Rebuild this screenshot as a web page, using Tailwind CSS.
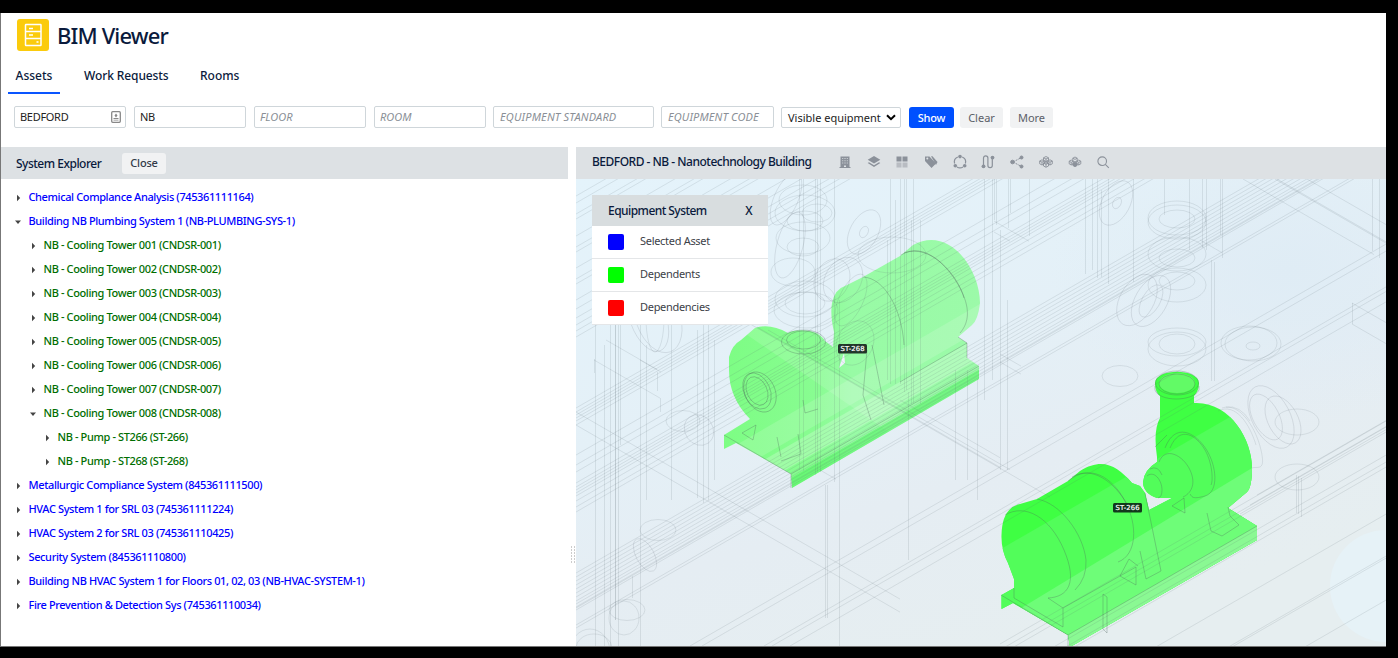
<!DOCTYPE html>
<html lang="en">
<head>
<meta charset="utf-8">
<title>BIM Viewer</title>
<script src="https://cdn.jsdelivr.net/npm/@tailwindcss/browser@4"></script>
</head>
<body class="bg-black w-[1398px] h-[658px] overflow-hidden pt-[13px] font-['Noto_Sans','Open_Sans',sans-serif] text-[#0a1a3c]">
<div class="w-[1386px] h-[634px] bg-white border-l border-b border-[#777] flex flex-col overflow-hidden">
  <header class="flex items-center gap-[8px] pl-4 pt-[6px] h-[38px]">
    <svg class="w-8 h-8 shrink-0" viewBox="0 0 32 32" fill="none" stroke="#fff" stroke-width="1.500"><rect width="32" height="32" rx="3" fill="#fbcb0c" stroke="none"/><rect x="8.500" y="5.500" width="15.500" height="21" rx=".5"/><path d="M8.500 12.500h15.500M8.500 19.500h15.500M12 9.500h4M12 16h4M19.500 23h2"/></svg>
    <h1 class="text-[22px] leading-8 font-medium tracking-[-0.85px] whitespace-nowrap">BIM Viewer</h1>
  </header>
  <nav class="flex h-[43px] pt-[12px] pl-[7px] text-[12px] leading-[26px] font-medium">
    <a class="w-[52px] h-[31px] text-center border-b-2 border-[#0a55ff]">Assets</a>
    <a class="ml-6 w-[84px] text-center tracking-[-0.1px] whitespace-nowrap">Work Requests</a>
    <a class="ml-8 w-[39px] text-center">Rooms</a>
  </nav>
  <section class="flex items-start pl-[13px] pt-[12px] h-[53px] text-[11px] leading-5 text-[#222]">
    <div class="w-[112px] h-[22px] border border-[#cfd6da] rounded-[2px] px-[5px] flex items-center justify-between"><span class="tracking-[-0.3px]">BEDFORD</span>
      <svg class="w-[10px] h-[12px] mr-[-1px]" viewBox="0 0 10 12"><rect x=".7" y=".7" width="8.600" height="10.600" rx="1" fill="none" stroke="#888" stroke-width="1.300"/><path d="M5 2.500l1.500 2-1.500 2-1.500-2zM2.500 7h5v1h-5zM2.500 8.800h5v.6h-5z" fill="#888"/></svg></div>
    <div class="ml-2 w-[112px] h-[22px] border border-[#cfd6da] rounded-[2px] px-[5px] tracking-[-0.3px]">NB</div>
    <div class="ml-2 w-[112px] h-[22px] border border-[#cfd6da] rounded-[2px] px-[5px] italic text-[#8a8f96]">FLOOR</div>
    <div class="ml-2 w-[112px] h-[22px] border border-[#cfd6da] rounded-[2px] px-[5px] italic text-[#8a8f96]">ROOM</div>
    <div class="ml-[7px] w-[161px] h-[22px] border border-[#cfd6da] rounded-[2px] px-[6px] italic text-[#8a8f96] tracking-[0.17px]">EQUIPMENT STANDARD</div>
    <div class="ml-[7px] w-[113px] h-[22px] border border-[#cfd6da] rounded-[2px] px-[6px] italic text-[#8a8f96] tracking-[0.12px] whitespace-nowrap">EQUIPMENT CODE</div>
    <div class="ml-[7px] mt-px w-[120px] h-[21px] border border-[#cfd6da] rounded-[2px] pl-[6px] pr-1 flex items-center justify-between whitespace-nowrap"><span>Visible equipment</span>
      <svg class="w-[10px] h-[7px]" viewBox="0 0 10 7" fill="none" stroke="#000" stroke-width="2"><path d="M1 1.200l4 4 4-4"/></svg></div>
    <div class="ml-2 mt-px w-[45px] h-[21px] rounded-[3px] bg-[#0050ff] text-white text-center leading-[22px] font-medium tracking-[-0.2px]">Show</div>
    <div class="ml-[6px] mt-px w-[43px] h-[21px] rounded-[3px] bg-[#f1f2f3] text-[#5b6068] text-center leading-[22px]">Clear</div>
    <div class="ml-[7px] mt-px w-[43px] h-[21px] rounded-[3px] bg-[#f1f2f3] text-[#5b6068] text-center leading-[22px]">More</div>
  </section>
  <main class="flex flex-1 min-h-0">
    <aside class="w-[567px] shrink-0">
      <div class="flex items-center bg-[#dde1e4] h-8 pl-[15px] text-[12px] font-medium">
        <span class="w-[106px] pt-[2px] tracking-[-0.5px] whitespace-nowrap">System Explorer</span>
        <span class="w-[44px] h-[21px] rounded-[3px] bg-[#f1f2f3] text-center leading-5 text-[11px] tracking-[-0.2px] text-[#333a48]">Close</span>
      </div>
      <ul id="tree" class="pt-[6px] text-[11px] leading-6 font-medium tracking-[-0.38px] whitespace-nowrap text-[#0000ff]"></ul>
    </aside>
    <div class="w-2 shrink-0 flex flex-col items-center pt-[399px] pl-px gap-px">
      <i class="w-1 h-[2px] border-x border-[#ccc]"></i><i class="w-1 h-[2px] border-x border-[#ccc]"></i><i class="w-1 h-[2px] border-x border-[#ccc]"></i><i class="w-1 h-[2px] border-x border-[#ccc]"></i><i class="w-1 h-[2px] border-x border-[#ccc]"></i><i class="w-1 h-[2px] border-x border-[#ccc]"></i>
    </div>
    <section class="flex-1 min-w-0 flex flex-col">
      <div class="flex items-center bg-[#dde1e4] h-8 pl-4 pb-[3px] text-[12px] font-medium shrink-0">
        <span class="w-[245px] tracking-[-0.5px] whitespace-nowrap">BEDFORD - NB - Nanotechnology Building</span>
        <div class="flex gap-[12.700px] text-[#8b919a]">
          <svg class="w-4 h-4" viewBox="0 0 16 16" fill="currentColor"><path fill-rule="evenodd" d="M3.500 2.500h9v10.500h1v1h-11v-1h1zM5.300 4v1h.9V4zm2.200 0v1h1V4zM9.800 4v1h.9V4zM5.300 6.200v1h.9v-1zm2.200 0v1h1v-1zm2.300 0v1h.9v-1zM5.300 8.500v1h.9v-1zm4.500 0v1h.9v-1zM7.500 8.500v1h1v-1zM7 11.500V13h2v-1.500z"/></svg>
          <svg class="w-4 h-4" viewBox="0 0 16 16" fill="currentColor"><path d="M8 2l6.300 3.800L8 9.500 1.700 5.800zM3 8.200l5 3 5-3 1.300.8L8 13 1.700 9z"/></svg>
          <svg class="w-4 h-4" viewBox="0 0 16 16" fill="currentColor"><path d="M2.500 2.500h5v5h-5zM8.500 2.500h5v5h-5z"/><path opacity=".45" d="M2.500 8.500h5v5h-5zM8.500 8.500h5v5h-5z"/></svg>
          <svg class="w-4 h-4" viewBox="0 0 16 16" fill="currentColor"><path fill-rule="evenodd" d="M2 2.500v4.500l6.500 7 4.500-4.500L6.500 2.500zm2.300 1a1 1 0 1 1 0 2 1 1 0 0 1 0-2z"/><path d="M8 2.300h1.500l5 5.700-1.500 3z"/></svg>
          <svg class="w-4 h-4" viewBox="0 0 16 16" fill="none" stroke="currentColor" stroke-width="1.200"><path d="M5.800 3A5.500 5.500 0 0 0 2.600 9.500M10.200 3a5.500 5.500 0 0 1 3.200 6.500M5 13a5.500 5.500 0 0 0 6 0"/><g fill="currentColor" stroke="none"><circle cx="8" cy="2.600" r="1.800"/><circle cx="3.300" cy="11.700" r="1.800"/><circle cx="12.700" cy="11.700" r="1.800"/></g></svg>
          <svg class="w-4 h-4" viewBox="0 0 16 16" fill="none" stroke="currentColor" stroke-width="1.200"><path d="M3.500 11V4a2.200 2.200 0 0 1 4.400 0v7.500a2.200 2.200 0 0 0 4.400 0V4.500"/><g fill="currentColor" stroke="none"><circle cx="3.500" cy="12.300" r="1.900"/><circle cx="12.500" cy="3.600" r="1.900"/></g></svg>
          <svg class="w-4 h-4" viewBox="0 0 16 16" fill="currentColor" stroke="currentColor"><path d="M4 8l8.500-4.500M4 8l8.500 4.500" fill="none" stroke-dasharray="2 1"/><circle cx="3.500" cy="8" r="1.800"/><circle cx="12.500" cy="3.500" r="1.500"/><circle cx="12.500" cy="12.500" r="1.500"/></svg>
          <svg class="w-4 h-4" viewBox="0 0 16 16" fill="none" stroke="currentColor" stroke-width=".9"><path d="M8 2.500l2.500 1.300v2.400L8 7.500 5.500 6.200V3.800zM8 5v8M5.500 3.800L8 5l2.500-1.200M1.700 7L4 5.800 6.300 7v2.800L4 11 1.700 9.800zM14.300 7L12 5.800 9.700 7v2.800L12 11l2.300-1.200zM1.700 7L4 8.200 6.300 7M4 8.200V11M9.700 7L12 8.200 14.300 7M12 8.200V11M5.500 9L8 7.700 10.500 9v3L8 13.300 5.500 12zM5.500 9L8 10.300 10.500 9"/></svg>
          <svg class="w-4 h-4" viewBox="0 0 16 16" fill="none" stroke="currentColor" stroke-width=".9"><path d="M8 3l2.200 1.200v2.600L8 8 5.800 6.800V4.200zM5.800 4.200L8 5.400l2.200-1.200M2.200 7.200L4.200 6l2 1.200v2.600l-2 1.200-2-1.200zM13.800 7.200L11.800 6l-2 1.200v2.600l2 1.200 2-1.200zM2.200 7.200l2 1.200 2-1.200M4.200 8.400V11M9.800 7.200l2 1.200 2-1.200M11.800 8.400V11"/><path d="M5.900 9.200L8 8l2.100 1.200v2.300L8 12.700l-2.100-1.200z" fill="currentColor"/></svg>
          <svg class="w-4 h-4" viewBox="0 0 16 16" fill="none" stroke="currentColor" stroke-width="1.100"><circle cx="7.200" cy="7.200" r="4.300"/><path d="M10.300 10.300l3.500 3.500"/></svg>
        </div>
      </div>
      <div class="relative flex-1 min-h-0 overflow-hidden">
        <svg id="scene" class="block w-[810px] h-[467px]" viewBox="576 179 810 467">
          <defs>
            <linearGradient id="bg" x1="0" y1="0" x2=".55" y2="1"><stop offset="0" stop-color="#e4f3fb"/><stop offset=".45" stop-color="#e4f0f7"/><stop offset=".7" stop-color="#e5edf3"/><stop offset="1" stop-color="#e6eef0"/></linearGradient>
            <linearGradient id="p1" x1="724" y1="0" x2="980" y2="0" gradientUnits="userSpaceOnUse"><stop offset="0" stop-color="#7dfd84"/><stop offset=".35" stop-color="#88fc91"/><stop offset=".5" stop-color="#98fba5"/><stop offset="1" stop-color="#9cfaa9"/></linearGradient>
            <radialGradient id="sky"><stop offset="0" stop-color="#dfecf5"/><stop offset="1" stop-color="#dfecf5" stop-opacity="0"/></radialGradient>
            <path id="pump1" d="M750 419Q729 398 729 370V357Q732 345 741 340L755 328Q770 323 788 333C795 329 818 328 825 341L833 347 834 332Q830 315 832 303Q835 289 845 286L863 277 900 256 913 245C950 225 980 270 980 303Q978 320 972 325L958 337 967 343V358L979 366V379L792 488 791 474 736 443 724 449V435Z"/>
            <path id="pump2" d="M1001.500 609V595L1014 588V579L1008 563Q1001 550 1001.500 535Q1002 508 1020 504L1037 499 1068 481 1080 471C1103 457 1117 466 1132 483L1140 486 1145 493 1149 510 1172 498H1157Q1143 493 1143 482 1144 470 1157 462V457Q1153 430 1160 418V396Q1155 392 1155 383C1156 368 1198 368 1199 383Q1199 391 1194 396V403C1230 401 1252 440 1252 467Q1252 487 1247 492L1228 508 1257 526V540L1070 647 1068 635 1013 603Z"/>
            <clipPath id="c1"><use href="#pump1"/></clipPath>
            <clipPath id="c2"><use href="#pump2"/></clipPath>
          </defs>
          <rect x="576" y="179" width="810" height="467" fill="url(#bg)"/>
          <ellipse cx="1290" cy="270" rx="240" ry="150" fill="url(#sky)"/>
          <circle cx="1386" cy="586" r="56" fill="#e6f2f7"/>
          <use href="#pump1" fill="url(#p1)"/>
          <g clip-path="url(#c1)">
            <path d="M724 452L980 304V330L745 466z" fill="#fff" opacity=".14"/>
            <path d="M755 465L980 336V358L775 476z" fill="#fff" opacity=".22"/>
            <path d="M756 327L870 393 915 419 890 433 740 330z" fill="#fff" opacity=".13"/>
            <path d="M792 488L980 380V369L791 478z" fill="#4bf45b" opacity=".5"/>
            <path d="M844 353L839 368L845 363z" fill="#eef2fa"/>
          </g>
          <use href="#pump2" fill="#3fff43"/>
          <g clip-path="url(#c2)">
            <path d="M980 561L1270 394V700H980z" fill="#52fd5a"/>
            <path d="M990 627L1270 457V700H980z" fill="#6efd78"/>
            <path d="M1068 635L1257 526V560L1070 660z" fill="#8af993"/>
            <ellipse cx="1177" cy="383" rx="18" ry="10" fill="#62fa66"/>
          </g>
          <g id="wires" fill="none" stroke="#5b646e" stroke-opacity=".2" stroke-width=".7"></g>
          <g fill="none" stroke="#4b605a" stroke-opacity=".38" stroke-width=".8">
            <ellipse cx="803.500" cy="342" rx="22" ry="12"/><ellipse cx="803.500" cy="340" rx="17" ry="9"/>
            <ellipse cx="757" cy="391" rx="13" ry="19" transform="rotate(-25 757 391)"/><ellipse cx="757" cy="391" rx="10" ry="15" transform="rotate(-25 757 391)"/><ellipse cx="760" cy="392" rx="15" ry="21" transform="rotate(-25 760 392)"/>
            <path d="M901 255C925 240 950 268 961 290S967 325 960 333M904 253C930 243 958 275 964 298M863 277C885 278 902 310 904 345M742 433l14-8-3 15zM777 437l4 20M798 434l3 20-20 7M803 400l2 13 13-4M724 435L791 474V488M967 343L900 382M791 474L979 366M958 337l9 6v15M867 350l-4 45 8 25"/>
            <path d="M872 345l12 60"/>
            <ellipse cx="1177" cy="384" rx="18" ry="10"/><ellipse cx="1177" cy="383" rx="21.500" ry="12"/><path d="M1155 386v4c4 12 38 12 44 0v-4"/>
            <path d="M1005 515C1025 503 1050 517 1064 550S1068 597 1048 598M1037 499C1060 503 1083 533 1086 560Q1087 578 1075 590M1068 481C1090 463 1112 477 1125 501S1137 555 1118 562M1072 477C1092 465 1115 482 1128 506M1145 493l16 78-15 8-6-28M1155 447l12-12M1165 448C1175 422 1195 432 1206 449S1219 492 1205 496 1192 496 1190 494M1170 448C1180 424 1197 436 1205 450S1213 482 1211 485M1159 462C1165 446 1183 455 1190 470S1190 494 1183 497M1147 476c7-6 15 4 15 14q0 7-4 8M1150 469q8-4 12 6M1172 506l12-8 1 15zM1207 513l4 18 11 5 17-11-9-9-2-9M1014 588V598L1063 627V608L1136 567V585L1120 576 1129 559 1138 566M1048 598L1063 608M1103 594V629L1107 633V597zM1001 595L1068 635V646M1068 635L1257 526"/>
          </g>
          <g font-family="DejaVu Sans" font-size="6.800" fill="#fff" stroke="#fff" stroke-width=".2" text-anchor="middle">
            <rect x="838" y="344" width="29" height="9.500" rx="1.500" fill="#22362b" stroke="none"/><text x="852.500" y="351.300" textLength="24">ST-268</text>
            <rect x="1113" y="503" width="29" height="9.500" rx="1.500" fill="#12391c" stroke="none"/><text x="1127.500" y="510.300" textLength="24">ST-266</text>
          </g>
        </svg>
        <div class="absolute left-4 top-4 w-[176px] bg-white text-[11px] tracking-[-0.3px] text-[#3c4148]">
          <div class="flex justify-between bg-[#d8dddf] h-[31px] leading-8 pl-4 pr-4 text-[12px] font-medium tracking-[-0.55px] text-[#0a1a3c]"><span>Equipment System</span><span>X</span></div>
          <div class="flex items-center gap-4 h-[33px] pl-4 border-b border-[#e4e6e8]"><i class="w-4 h-4 rounded-[2px] bg-[#0000ff]"></i><span class="pb-[2px]">Selected Asset</span></div>
          <div class="flex items-center gap-4 h-[33px] pl-4 border-b border-[#e4e6e8]"><i class="w-4 h-4 rounded-[2px] bg-[#00ff00]"></i><span class="pb-[2px]">Dependents</span></div>
          <div class="flex items-center gap-4 h-[33px] pl-4 border-b border-[#e4e6e8]"><i class="w-4 h-4 rounded-[2px] bg-[#ff0000]"></i><span class="pb-[2px]">Dependencies</span></div>
        </div>
      </div>
    </section>
  </main>
</div>
<script>
// Rows of the system tree: [depth, open, label]
const rows = [
 [0,0,'Chemical Complance Analysis (745361111164)'],[0,1,'Building NB Plumbing System 1 (NB-PLUMBING-SYS-1)'],
 ...[1,2,3,4,5,6,7,8].map(n=>[1,n===8?1:0,`NB - Cooling Tower 00${n} (CNDSR-00${n})`]),
 [2,0,'NB - Pump - ST266 (ST-266)'],[2,0,'NB - Pump - ST268 (ST-268)'],
 [0,0,'Metallurgic Compliance System (845361111500)'],[0,0,'HVAC System 1 for SRL 03 (745361111224)'],
 [0,0,'HVAC System 2 for SRL 03 (745361110425)'],[0,0,'Security System (845361110800)'],
 [0,0,'Building NB HVAC System 1 for Floors 01, 02, 03 (NB-HVAC-SYSTEM-1)'],[0,0,'Fire Prevention & Detection Sys (745361110034)']];
const pad = ['pl-[13px]','pl-[28px] text-[#006e00]','pl-[42px] text-[#006e00]'];
document.getElementById('tree').innerHTML = rows.map(([d,o,t])=>
 `<li class="flex items-center h-6 ${pad[d]}"><svg class="w-2 h-2 mr-[6.500px] mt-px shrink-0" viewBox="0 0 8 8" fill="#444"><path d="${o?'M1 2.500h6L4 6z':'M3 .8l3.200 3.200L3 7.200z'}"/></svg><span>${t.replace('&','&amp;')}</span></li>`).join('');

// Wireframe of the building; sloped members follow the 30 degree isometric axes
const S=.5774; let d='';
const up=(x,y,x2)=>{d+=`M${x} ${y}L${x2} ${(y-(x2-x)*S).toFixed(1)}`};
const down=(x,y,x2)=>{d+=`M${x} ${y}L${x2} ${(y+(x2-x)*S).toFixed(1)}`};
const vert=(x,a,b)=>{d+=`M${x+.5} ${a}V${b}`};
[196,203,214,219,236,247,252,268,279,284,300,309,318,325,331,337,408,412,415,418,421,425].forEach(y=>up(576,y,1100));
[455,465,472,483,487,490,493,496,501,507,512].forEach(y=>up(576,y,1200));
[573,577,581,585,589,593,597,601,604,607,608,610].forEach(y=>up(576,y,1386));
[625,628].forEach(y=>up(576,y,1386));
[[690,1386],[702,1386],[764,1386],[772,1386],[790,1386]].forEach(([x,b])=>up(x,646,b));
[[1257,495],[1250,505],[1240,514]].forEach(([x,y])=>up(x,y,1386));
[[1000,644],[1000,650],[1000,655],[1000,678],[1000,685],[1000,690],[1000,737],[1000,779],[1000,781],[1000,823]].forEach(([x,y])=>up(x,y,1386));
[[576,412,900],[576,425,900],[745,321,1050],[757,327,1000],[768,330,1010],[900,400,1000],[1243,179,1374],[1275,179,1386],[1277,179,1386],[1307,179,1386],[594,360,660],[606,340,657],[640,360,661],[994,221,1029],[994,232,1010],[1200,240,1222],[1352,303,1386],[1352,324,1386],[1000,354,1021],[1000,362,1021],[820,470,836]].forEach(a=>down(...a));
[[595,320,646],[604,345,646],[610,320,646],[615,320,620],[615,320,620],[618,320,646],[620,320,445],[640,320,646],[646,345,500],[671,320,500],[660,398,412],[697,330,498],[703,320,503],[708,320,500],[714,340,480],[799,179,470],[803,179,471],[815,179,475],[817,179,472],[820,179,472],[827,485,618],[825,485,618],[834,179,482],[839,300,646],[887,240,380],[890,179,384],[895,200,384],[900,179,384],[904,179,392],[906,179,390],[911,220,404],[913,179,403],[920,220,404],[908,392,560],[955,370,480],[967,370,480],[977,379,500],[992,179,380],[994,179,220],[996,179,225],[1008,179,228],[1010,179,213],[1029,179,236],[984,179,400],[1000,230,470],[1007,300,470],[1085,179,274],[1092,179,270],[1097,179,278],[1101,190,277],[1108,179,284],[1133,179,282],[1164,179,215],[1189,179,250],[1202,179,248],[1206,179,250],[1222,179,258],[1220,179,235],[1211,260,381],[1214,262,381],[1352,303,324],[1372,179,251],[1379,179,258],[1296,475,513],[1298,476,514],[1301,478,517],[632,576,598],[594,359,373],[657,372,391]].forEach(a=>vert(...a));
// rings: cx, cy, rx, ry, rotation
const rings=[[1177,218,29,17],[1177,222,29,17],[1177,219,18,9],[1177,254,29,17],[1177,258,18,9],[1177,281,18,9],[1177,285,29,17],[1177,342,29,14],[1177,349,29,17],[1177,344,18,10],[1120,376,18,10.500],[1253,344,28,17],[1253,346,7,4],[1249,343,28,17],
[1116,203,14,24,28],[1117,203,4,6,28],[1137,300,17,28,30],[1151,301,16,28,30],[1151,301,9,18,30],[1271,417,19,34,-28],[1266,417,13,25,-28],[1283,420,15,26,-28],[1297,422,22,13],[1297,477,22,13],
[658,530,18,10.500],[645,555,9,18,-28],[627,610,18,10.500],[624,618,15,17],[594,648,18,14],[590,652,20,23],[683,421,17,10.500],[699,430,14,16,-35],[658,318,22,36,-20],[648,318,18,35,-20],[655,318,9,34],
[803,200,24,15],[805,213,30,18],[805,221,18,10],[803,238,27,16],[803,247,16,9],[805,299,30,18],[805,303,20,11],[806,310,32,18],[790,245,13,34,15],[832,280,17,22,25],[843,280,18,24,30],[864,232,14,24,28],[864,232,4,6,28],[786,199,12,28,24],[851,300,12,28,25],[892,255,34,18],[793,272,22,14],[855,343,18,23,25],[817,213,15,9]];
// pipe flange arcs that show behind the second pump
d+='M1222 408C1240 402 1256 428 1261 450S1258 466 1252 468M1218 411C1236 402 1250 425 1256 445M1226 407q14-2 24 14';
document.getElementById('wires').innerHTML=`<path d="${d}"/>`+rings.map(([x,y,a,b,r=0])=>`<ellipse cx="${x}" cy="${y}" rx="${a}" ry="${b}" transform="rotate(${r} ${x} ${y})"/>`).join('');
</script>
</body>
</html>
